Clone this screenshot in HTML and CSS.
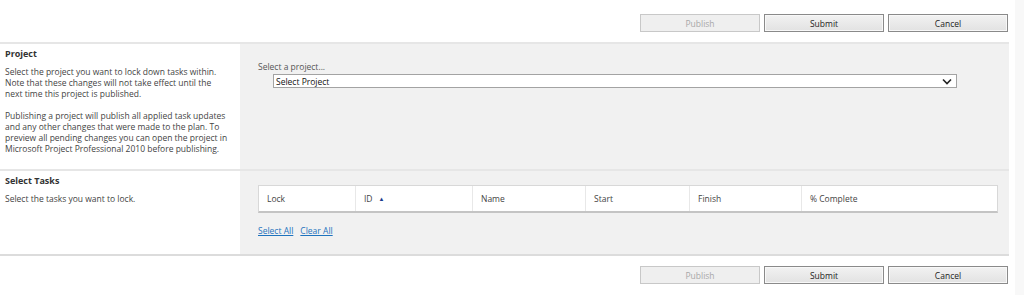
FILE: index.html
```html
<!DOCTYPE html>
<html lang="en">
<head>
    <meta charset="UTF-8">
    <meta name="viewport" content="width=device-width, initial-scale=1.0">
    <title>Lock Down Tasks</title>
    <link rel="stylesheet" href="styles.css">
</head>
<body>

    <div class="shell">
        <div class="main">

            <div class="toolbar toolbar-top">
                <button class="btn" disabled>Publish</button>
                <button class="btn">Submit</button>
                <button class="btn">Cancel</button>
            </div>

            <div class="section section-project">
                <div class="section-info">
                    <h3>Project</h3>
                    <p>Select the project you want to lock down tasks within.<br>Note that these changes will not take effect until the<br>next time this project is published.</p>
                    <p>Publishing a project will publish all applied task updates<br>and any other changes that were made to the plan. To<br>preview all pending changes you can open the project in<br>Microsoft Project Professional 2010 before publishing.</p>
                </div>
                <div class="section-body">
                    <label class="field-label" for="project">Select a project...</label>
                    <div class="select-box">
                        <span>Select Project</span>
                        <svg width="10" height="7" viewBox="0 0 10 7"><path d="M1 1.5 L5 5.5 L9 1.5" fill="none" stroke="#222" stroke-width="1.6"/></svg>
                    </div>
                </div>
            </div>

            <div class="section section-tasks">
                <div class="section-info">
                    <h3>Select Tasks</h3>
                    <p>Select the tasks you want to lock.</p>
                </div>
                <div class="section-body">
                    <div class="grid">
                        <div class="col col-lock">Lock</div>
                        <div class="col col-id">ID <span class="sort">&#9650;</span></div>
                        <div class="col col-name">Name</div>
                        <div class="col col-start">Start</div>
                        <div class="col col-finish">Finish</div>
                        <div class="col col-pct">% Complete</div>
                    </div>
                    <div class="grid-links">
                        <a href="#">Select All</a>
                        <a href="#">Clear All</a>
                    </div>
                </div>
            </div>

            <div class="toolbar toolbar-bottom">
                <button class="btn" disabled>Publish</button>
                <button class="btn">Submit</button>
                <button class="btn">Cancel</button>
            </div>

        </div>
        <div class="rail"></div>
    </div>

</body>
</html>
```

FILE: styles.css
```css
body {
    font-family: "Open Sans", "Noto Sans", sans-serif;
    font-size: 8.5px;
    color: #444;
    background-color: #ffffff;
    margin: 0;
    padding: 0;
}

.shell {
    display: flex;
    height: 295px;
    overflow: hidden;
}

.main {
    width: 1009px;
}

.rail {
    flex: 1;
    margin-left: 6px;
    background-color: #f8f8f8;
}

/* button rows */
.toolbar {
    display: flex;
    justify-content: flex-end;
    gap: 4px;
    padding-right: 1px;
}

.toolbar-top {
    height: 42px;
    padding-top: 14px;
    box-sizing: border-box;
}

.toolbar-bottom {
    padding-top: 10px;
}

.btn {
    width: 120px;
    height: 18px;
    padding: 0;
    font-family: inherit;
    font-size: 8.5px;
    color: #222;
    background: linear-gradient(#f2f2f2, #e2e2e2);
    border: 1px solid #8a8a8a;
    box-shadow: inset 0 0 0 1px #f8f8f8;
}

.btn:disabled {
    color: #a8a8a8;
    background: #efefef;
    border-color: #c8c8c8;
    box-shadow: none;
}

/* sections */
.section {
    display: grid;
    grid-template-columns: 240px 1fr;
    border-top: 2px solid #e6e6e6;
    box-sizing: border-box;
}

.section-project {
    height: 127px;
}

.section-tasks {
    height: 87px;
    border-bottom: 2px solid #dcdcdc;
}

.section-info {
    padding: 3px 5px 0 5px;
}

.section-info h3 {
    margin: 0 0 5px 0;
    font-size: 9px;
    line-height: 14px;
    font-weight: bold;
    color: #333;
}

.section-info p {
    margin: 0 0 11px 0;
    line-height: 11px;
    white-space: nowrap;
    color: #444;
}

.section-body {
    background-color: #f1f1f1;
    padding-left: 18px;
}

.section-project .section-body {
    padding-top: 17px;
}

.field-label {
    display: block;
    color: #555;
    line-height: 11px;
    margin-bottom: 2px;
}

.select-box {
    width: 684px;
    height: 14px;
    margin-left: 15px;
    box-sizing: border-box;
    background-color: #ffffff;
    border: 1px solid #a3a3a3;
    display: flex;
    align-items: center;
    justify-content: space-between;
    padding: 0 4px 0 2px;
    color: #111;
}

/* task grid */
.section-tasks .section-body {
    padding-top: 14px;
}

.grid {
    width: 740px;
    height: 28px;
    box-sizing: border-box;
    display: flex;
    background-color: #ffffff;
    border: 1px solid #d8d8d8;
    border-bottom: 2px solid #c4c4c4;
}

.col {
    display: flex;
    align-items: center;
    padding-left: 8px;
    border-right: 1px solid #e8e8e8;
    color: #444;
}

.col-lock { width: 88px; }
.col-id { width: 108px; }
.col-name { width: 104px; }
.col-start { width: 95px; }
.col-finish { width: 103px; }
.col-pct { flex: 1; border-right: none; }

.sort {
    font-size: 6px;
    color: #1a3c8c;
    margin-left: 6px;
}

.grid-links {
    margin-top: 12px;
    display: flex;
    gap: 7px;
}

.grid-links a {
    color: #1e73be;
    text-decoration: underline;
}
```
